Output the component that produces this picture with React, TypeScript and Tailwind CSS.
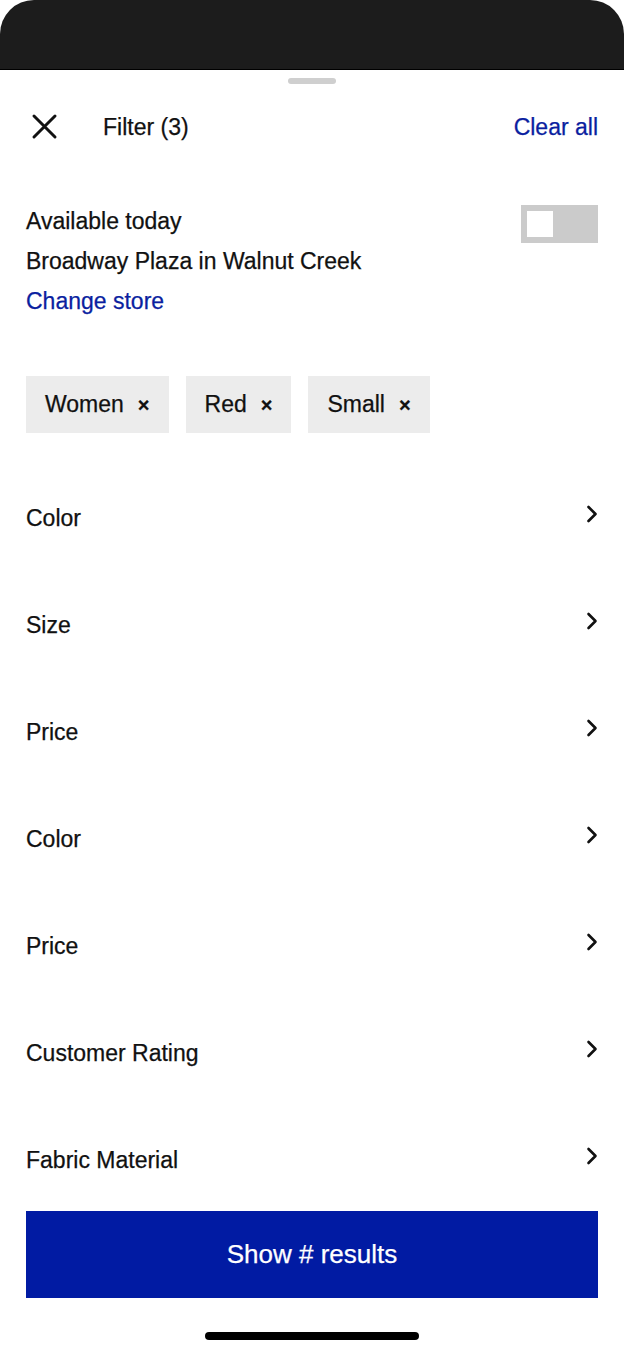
import React from 'react';

const rows = ['Color', 'Size', 'Price', 'Color', 'Price', 'Customer Rating', 'Fabric Material'];
const chips = ['Women', 'Red', 'Small'];

const Chevron = () => (
  <svg width="12" height="18" viewBox="0 0 12 18" fill="none" className="mb-[10px]">
    <path d="M2.5 2L9.5 9L2.5 16" stroke="#111" strokeWidth="2.6" strokeLinecap="round" strokeLinejoin="round" />
  </svg>
);

const FilterSheet = () => {
  return (
    <div className="w-[624px] h-[1351px] bg-white overflow-hidden text-[#111] [-webkit-text-stroke:0.25px]" style={{ fontFamily: '"Liberation Sans", Arial, sans-serif' }}>
      {/* status area */}
      <div className="h-[69px] bg-[#1c1c1c] rounded-t-[34px]" />
      <div className="h-[1px] bg-[#000]" />

      {/* sheet */}
      <div className="flex flex-col">
        <div className="flex justify-center pt-[8px]">
          <div className="w-[48px] h-[6px] rounded-full bg-[#cfcfcf]" />
        </div>

        {/* header */}
        <div className="h-[86px] flex items-center px-[26px]">
          <svg width="34" height="34" viewBox="0 0 34 34" fill="none" className="ml-[1px]">
            <path d="M7 6L28 27M28 6L7 27" stroke="#111" strokeWidth="3" strokeLinecap="round" />
          </svg>
          <span className="ml-[42px] text-[23px]">Filter (3)</span>
          <span className="ml-auto text-[23px] text-[#0b1fa0]">Clear all</span>
        </div>

        {/* store */}
        <div className="mt-[31px] px-[26px] flex items-start">
          <div className="flex flex-col text-[23px] leading-[40px]">
            <span>Available today</span>
            <span>Broadway Plaza in Walnut Creek</span>
            <span className="text-[#0b1fa0]">Change store</span>
          </div>
          <div className="ml-auto mt-[4px] w-[77px] h-[38px] bg-[#cbcbcb] p-[6px]">
            <div className="w-[26px] h-[26px] bg-white" />
          </div>
        </div>

        {/* chips */}
        <div className="mt-[55px] px-[26px] flex gap-[17px]">
          {chips.map((c) => (
            <div key={c} className="h-[57px] bg-[#ececec] flex items-center pl-[19px] pr-[19px] text-[23px]">
              <span>{c}</span>
              <span className="ml-[14px] text-[20px] font-bold leading-none">×</span>
            </div>
          ))}
        </div>

        {/* list */}
        <div className="mt-[32px] flex flex-col">
          {rows.map((r, i) => (
            <div key={i} className="h-[107px] px-[26px] flex items-center justify-between text-[23px]">
              <span>{r}</span>
              <Chevron />
            </div>
          ))}
        </div>

        <div className="-mt-[3px] px-[26px]">
          <button className="w-full h-[87px] bg-[#011ba3] text-white text-[26px]">Show # results</button>
        </div>

        <div className="mt-[34px] flex justify-center">
          <div className="w-[214px] h-[8px] rounded-full bg-black" />
        </div>
      </div>
    </div>
  );
};

export default function App() {
  return <FilterSheet />;
}
